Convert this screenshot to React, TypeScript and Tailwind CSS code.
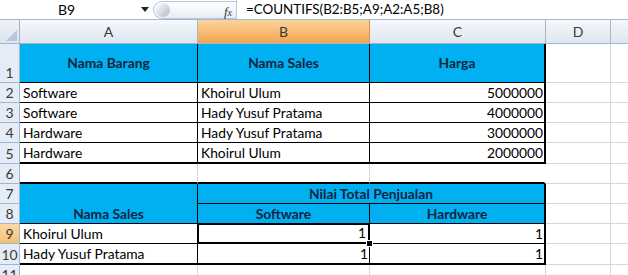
import React from "react";

const FONT = { fontFamily: "Lato, 'Noto Sans', sans-serif" };

const GRID = "border-[#d0d7e5]";

function RowHead({ n, h, active }: { n?: string; h: string; active?: boolean }) {
  return (
    <div
      className={`w-[20px] shrink-0 ${h} border-r border-b border-[#9eb6ce] flex items-end justify-center text-[14px] leading-[18px] text-[#3a3a3a] ${
        active ? "bg-gradient-to-b from-[#fbd9a5] to-[#f6bf73]" : "bg-[#e4ecf7]"
      }`}
    >
      {n}
    </div>
  );
}

export default function App() {
  const blue = "bg-[#00b0f0]";
  const hdrText = "font-bold text-[#10253f]";
  return (
    <div className="w-[628px] h-[275px] overflow-hidden bg-white text-[13.8px] text-black" style={FONT}>
      {/* Formula bar */}
      <div className="h-[20px] flex items-center border-b border-[#a7b8cd] bg-white">
        <div className="w-[137px] h-full flex items-center justify-center text-[14px] pr-[4px]">B9</div>
        <div className="w-[16px] flex items-center justify-center">
          <svg width="8" height="5" viewBox="0 0 8 5">
            <path d="M0 0 L8 0 L4 5 Z" fill="#222" />
          </svg>
        </div>
        <div className="relative h-[18px] w-[83px] rounded-l-full border border-r-0 border-[#b9c6d8] bg-gradient-to-b from-[#ffffff] to-[#e7edf5] flex items-center">
          <div className="ml-[2px] w-[14px] h-[14px] rounded-full bg-gradient-to-br from-[#ffffff] via-[#d5dce6] to-[#aeb9c7]" />
          <span
            className="absolute right-[4px] top-[0px] text-[13px] italic text-[#333]"
            style={{ fontFamily: "'Liberation Serif', serif" }}
          >
            f<span className="text-[10px]">x</span>
          </span>
        </div>
        <div className="w-px h-[20px] bg-[#b9c6d8]" />
        <div className="pl-[9px] text-[13.4px] whitespace-nowrap">=COUNTIFS(B2:B5;A9;A2:A5;B8)</div>
      </div>

      {/* Column headers */}
      <div className="h-[24px] flex border-b border-[#9eb6ce]">
        <div className="w-[20px] shrink-0 border-r border-[#9eb6ce] bg-gradient-to-b from-[#eef2f8] to-[#dce4ee] relative">
          <svg className="absolute right-[2px] bottom-[2px]" width="11" height="11" viewBox="0 0 11 11">
            <path d="M11 0 L11 11 L0 11 Z" fill="#b7c6d8" />
          </svg>
        </div>
        <div className="w-[178px] shrink-0 border-r border-[#9eb6ce] bg-gradient-to-b from-[#f5f8fc] to-[#dfe6ef] flex items-center justify-center text-[14px] text-[#3a3a3a]">A</div>
        <div className="w-[172px] shrink-0 border-r border-[#d9924a] bg-gradient-to-b from-[#fbd39a] to-[#f4a44e] flex items-center justify-center text-[14px] text-[#3a3a3a]">B</div>
        <div className="w-[176px] shrink-0 border-r border-[#9eb6ce] bg-gradient-to-b from-[#f5f8fc] to-[#dfe6ef] flex items-center justify-center text-[14px] text-[#3a3a3a]">C</div>
        <div className="w-[65px] shrink-0 border-r border-[#9eb6ce] bg-gradient-to-b from-[#f5f8fc] to-[#dfe6ef] flex items-center justify-center text-[14px] text-[#3a3a3a]">D</div>
        <div className="flex-1 bg-gradient-to-b from-[#f5f8fc] to-[#dfe6ef]" />
      </div>

      {/* Row 1 */}
      <div className="flex h-[39px]">
        <RowHead n="1" h="h-[39px]" />
        <div className={`w-[178px] shrink-0 ${blue} border-r border-b border-black flex items-center justify-center ${hdrText}`}>Nama Barang</div>
        <div className={`w-[172px] shrink-0 ${blue} border-r border-b border-black flex items-center justify-center ${hdrText}`}>Nama Sales</div>
        <div className={`w-[176px] shrink-0 ${blue} border-r-2 border-b border-black flex items-center justify-center ${hdrText}`}>Harga</div>
        <div className={`w-[65px] shrink-0 border-r border-b ${GRID}`} />
        <div className={`flex-1 border-b ${GRID}`} />
      </div>

      {[
        ["2", "Software", "Khoirul Ulum", "5000000"],
        ["3", "Software", "Hady Yusuf Pratama", "4000000"],
        ["4", "Hardware", "Hady Yusuf Pratama", "3000000"],
        ["5", "Hardware", "Khoirul Ulum", "2000000"],
      ].map(([n, a, b, c]) => {
        const last = n === "5";
        const h = last ? "h-[21px]" : "h-[20px]";
        const bb = last ? "border-b-2" : "border-b";
        return (
          <div key={n} className={`flex ${h}`}>
            <RowHead n={n} h={h} />
            <div className={`w-[178px] shrink-0 border-r ${bb} border-black flex items-end pl-[3px] leading-[18px]`}>{a}</div>
            <div className={`w-[172px] shrink-0 border-r ${bb} border-black flex items-end pl-[3px] leading-[18px]`}>{b}</div>
            <div className={`w-[176px] shrink-0 border-r-2 ${bb} border-black flex items-end justify-end pr-[1px] leading-[18px]`}>{c}</div>
            <div className={`w-[65px] shrink-0 border-r border-b ${GRID}`} />
            <div className={`flex-1 border-b ${GRID}`} />
          </div>
        );
      })}

      {/* Row 6 */}
      <div className="flex h-[20px]">
        <RowHead n="6" h="h-[20px]" />
        <div className="w-[178px] shrink-0 border-r border-[#d0d7e5] border-b-2 border-b-black" />
        <div className="w-[172px] shrink-0 border-r border-[#d0d7e5] border-b-2 border-b-black" />
        <div className="w-[176px] shrink-0 border-r-2 border-r-white border-b-2 border-b-black" />
        <div className={`w-[65px] shrink-0 border-r border-b ${GRID}`} />
        <div className={`flex-1 border-b ${GRID}`} />
      </div>

      {/* Rows 7-8 */}
      <div className="flex h-[40px]">
        <div className="flex flex-col">
          <RowHead n="7" h="h-[20px]" />
          <RowHead n="8" h="h-[20px]" />
        </div>
        <div className={`w-[178px] shrink-0 ${blue} border-r border-b border-black flex items-end justify-center leading-[18px] ${hdrText}`}>Nama Sales</div>
        <div className="w-[348px] shrink-0 flex flex-col">
          <div className={`h-[20px] ${blue} border-r-2 border-b border-black flex items-end justify-center leading-[18px] ${hdrText}`}>Nilai Total Penjualan</div>
          <div className="h-[20px] flex">
            <div className={`w-[172px] shrink-0 ${blue} border-r border-b border-b-[#8a8a8a] border-r-black flex items-end justify-center leading-[18px] ${hdrText}`}>Software</div>
            <div className={`w-[176px] shrink-0 ${blue} border-r-2 border-b border-black flex items-end justify-center leading-[18px] ${hdrText}`}>Hardware</div>
          </div>
        </div>
        <div className="flex flex-col">
          <div className={`w-[65px] h-[20px] border-r border-b ${GRID}`} />
          <div className={`w-[65px] h-[20px] border-r border-b ${GRID}`} />
        </div>
        <div className="flex-1 flex flex-col">
          <div className={`h-[20px] border-b ${GRID}`} />
          <div className={`h-[20px] border-b ${GRID}`} />
        </div>
      </div>

      {/* Row 9 */}
      <div className="flex h-[20px]">
        <RowHead n="9" h="h-[20px]" active />
        <div className="w-[178px] shrink-0 border-r border-b border-black flex items-end pl-[3px] leading-[18px]">Khoirul Ulum</div>
        <div className="relative w-[172px] shrink-0 border-r border-b border-black">
          <div className="absolute -left-[1px] -top-[1px] -right-[1px] -bottom-[1px] border-2 border-black">
            <div className="w-full h-full border border-white flex items-end justify-end pr-[1px] leading-[16px]">1</div>
          </div>
          <div className="absolute -right-[3px] -bottom-[3px] w-[5px] h-[5px] bg-black outline outline-1 outline-white" />
        </div>
        <div className="w-[176px] shrink-0 border-r-2 border-b border-black flex items-end justify-end pr-[1px] leading-[18px]">1</div>
        <div className={`w-[65px] shrink-0 border-r border-b ${GRID}`} />
        <div className={`flex-1 border-b ${GRID}`} />
      </div>

      {/* Row 10 */}
      <div className="flex h-[21px]">
        <RowHead n="10" h="h-[21px]" />
        <div className="w-[178px] shrink-0 border-r border-b-2 border-black flex items-end pl-[3px] leading-[18px]">Hady Yusuf Pratama</div>
        <div className="w-[172px] shrink-0 border-r border-b-2 border-black flex items-end justify-end pr-[1px] leading-[18px]">1</div>
        <div className="w-[176px] shrink-0 border-r-2 border-b-2 border-black flex items-end justify-end pr-[1px] leading-[18px]">1</div>
        <div className={`w-[65px] shrink-0 border-r border-b ${GRID}`} />
        <div className={`flex-1 border-b ${GRID}`} />
      </div>

      {/* Row 11 */}
      <div className="flex h-[20px]">
        <RowHead n="11" h="h-[20px]" />
        <div className={`w-[178px] shrink-0 border-r ${GRID}`} />
        <div className={`w-[172px] shrink-0 border-r ${GRID}`} />
        <div className={`w-[176px] shrink-0 border-r ${GRID}`} />
        <div className={`w-[65px] shrink-0 border-r ${GRID}`} />
        <div className="flex-1" />
      </div>
    </div>
  );
}
